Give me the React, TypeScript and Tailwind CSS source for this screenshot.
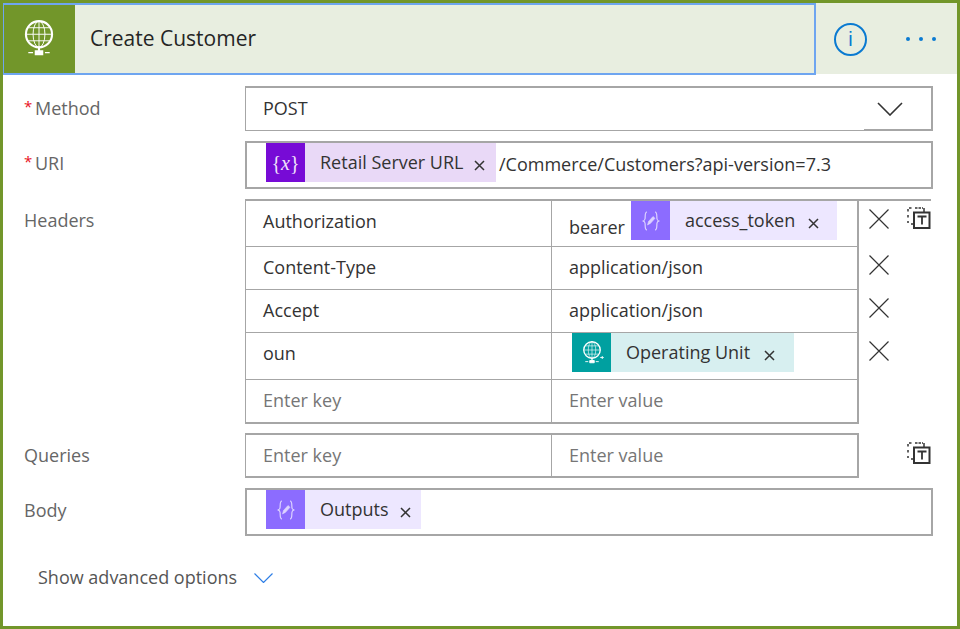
import React from 'react';

const GlobeIcon = ({ size, arrow }: { size: number; arrow?: boolean }) => (
  <svg width={size} height={size} viewBox="0 0 32 32" fill="none" stroke="white" strokeWidth="1.800">
    <circle cx="16" cy="12" r="11" />
    <ellipse cx="16" cy="12" rx="5" ry="11" strokeWidth="0.800" />
    <path d="M5 12h22M7 6.500h18M7 17.500h18M16 1v22" strokeWidth="0.800" />
    <path d="M16 23v3" />
    <path d="M13 26h6v3h-6zM7 27.500h4M21 27.500h4" fill="white" strokeWidth="1.200" />
    {arrow && <path d="M27 22h4M29 20l2 2-2 2" strokeWidth="1.200" />}
  </svg>
);

const VariableIcon = () => (
  <span className="font-['Liberation_Serif',serif] text-[20px] italic leading-none text-[#f1e4fb]">
    <span className="not-italic">{'{'}</span>x<span className="not-italic">{'}'}</span>
  </span>
);

const ComposeIcon = () => (
  <svg width="20" height="22" viewBox="0 0 20 22" fill="none" stroke="#ddd3ff" strokeWidth="1.200">
    <path d="M6 2C3.500 2 4.500 6 4 9c-.3 1.500-1.500 2-2.500 2 1 0 2.200.5 2.500 2 .5 3-.5 7 2 7" />
    <path d="M14 2c2.500 0 1.500 4 2 7 .3 1.500 1.500 2 2.500 2-1 0-2.200.5-2.500 2-.5 3 .5 7-2 7" />
    <path d="M6.500 15l1-3.500 4.500-5 2 1.800-4.500 5z" fill="#ddd3ff" strokeWidth="0.600" />
  </svg>
);

const SmallX = () => (
  <svg width="11" height="11" viewBox="0 0 11 11" stroke="#333" strokeWidth="1.500">
    <path d="M1 1l9 9M10 1l-9 9" />
  </svg>
);

const BigX = () => (
  <svg width="20" height="20" viewBox="0 0 20 20" stroke="#333" strokeWidth="1.200">
    <path d="M0.500 0.500l19 19M19.500 0.500l-19 19" />
  </svg>
);

const TextIcon = () => (
  <svg width="24" height="22" viewBox="0 0 24 22" fill="none" stroke="#333">
    <path d="M8 1h8M2 1h3M1 2v3M1 8v3M1 14v2M4 17h2" strokeWidth="1.500" strokeDasharray="2.500 1" />
    <path d="M17 1v4" strokeWidth="1.500" />
    <rect x="7" y="5.500" width="15.500" height="15.500" strokeWidth="2" />
    <path d="M10.500 9.500h9M15 9.500v8" strokeWidth="1.800" />
  </svg>
);

const Token = ({
  label,
  icon,
  iconBg,
  bg,
  width,
  labelWidth,
}: {
  label: string;
  icon: React.ReactNode;
  iconBg: string;
  bg: string;
  width: string;
  labelWidth: string;
}) => (
  <div className={`flex h-[39px] shrink-0 items-center ${bg} ${width}`}>
    <div className={`flex h-[39px] w-[39px] shrink-0 items-center justify-center ${iconBg}`}>{icon}</div>
    <span className={`ml-[15px] whitespace-nowrap text-[#333] ${labelWidth}`}>{label}</span>
    <span className="mt-[5px] flex">
      <SmallX />
    </span>
  </div>
);

const Label = ({ text, required, className }: { text: string; required?: boolean; className?: string }) => (
  <div className={`flex w-[221px] shrink-0 pl-[21px] text-[#666] ${className ?? ''}`}>
    <span className="w-[11px] text-[15px] text-[#e81123]">{required ? '*' : ''}</span>
    <span className={required ? '' : '-ml-[11px]'}>{text}</span>
  </div>
);

const HeaderRow = ({
  left,
  right,
  height,
  placeholder,
  leftPad,
  children,
}: {
  left: string;
  right?: React.ReactNode;
  height: string;
  placeholder?: boolean;
  leftPad?: string;
  children?: React.ReactNode;
}) => (
  <div className="flex">
    <div className={`flex w-[614px] shrink-0 border-b border-[#a6a6a6] ${height}`}>
      <div className={`flex w-[307px] shrink-0 items-center border-r border-l border-[#a6a6a6] pl-[17px] ${leftPad ?? 'pb-[2px]'} ${placeholder ? 'text-[#767676]' : 'text-[#333]'}`}>
        {left}
      </div>
      <div className={`flex flex-1 items-center border-r-2 border-[#a6a6a6] ${placeholder ? 'text-[#767676]' : 'text-[#333]'}`}>{right}</div>
    </div>
    {children}
  </div>
);

export default function App() {
  return (
    <div className="flex h-[629px] w-[960px] flex-col overflow-hidden border-[3px] border-[#72962a] bg-white font-['Open_Sans',sans-serif] text-[18px]">
      {/* Header bar */}
      <div className="flex h-[71px] shrink-0 bg-[#e8eee0]">
        <div className="-ml-px flex h-[72px] w-[814px] shrink-0 items-stretch border-2 border-[#6ea5f0]">
          <div className="flex w-[71px] items-center justify-center bg-[#72962a] pb-[1px] pr-[1px]">
            <GlobeIcon size={38} />
          </div>
          <div className="flex items-center pl-[15px] text-[21px] text-[#252525]">Create Customer</div>
        </div>
        <div className="flex flex-1 items-center">
          <div className="ml-[18px] mt-[1px] flex h-[33px] w-[33px] items-center justify-center rounded-full border-2 border-[#0a7ad1] font-['Liberation_Sans',sans-serif] text-[20px] leading-none text-[#0a7ad1]">
            i
          </div>
          <div className="ml-[39px] mt-[1px] flex gap-[9px]">
            <span className="h-[4px] w-[4px] rounded-full bg-[#0a7ad1]" />
            <span className="h-[4px] w-[4px] rounded-full bg-[#0a7ad1]" />
            <span className="h-[4px] w-[4px] rounded-full bg-[#0a7ad1]" />
          </div>
        </div>
      </div>

      {/* Form */}
      <div className="flex flex-col">
        <div className="mt-[12px] flex h-[45px] items-center">
          <Label text="Method" required className="pb-[1px]" />
          <div className="ml-[21px] flex h-full w-[688px]">
            <div className="flex flex-1 items-center border-y border-l border-y-[#a6a6a6] border-l-[#a6a6a6] border-t-2 pl-[17px] pb-[1px] text-[#333]">POST</div>
            <div className="flex w-[69px] items-center border-2 border-l-0 border-[#a6a6a6] pl-[13px]">
              <svg width="26" height="14" viewBox="0 0 26 14" fill="none" stroke="#333" strokeWidth="1.600">
                <path d="M1 1l12 12L25 1" />
              </svg>
            </div>
          </div>
        </div>

        <div className="mt-[10px] flex h-[48px] items-center">
          <Label text="URI" required className="pb-[3px]" />
          <div className="ml-[21px] flex h-full w-[688px] items-start border-2 border-[#a6a6a6] pl-[19px]">
            <Token
              label="Retail Server URL"
              icon={<VariableIcon />}
              iconBg="bg-[#770bd6]"
              bg="bg-[#e9d9f7]"
              width="w-[230px]"
              labelWidth="w-[154px]"
            />
            <span className="ml-[3px] mt-[8px] whitespace-nowrap text-[#333]">/Commerce/Customers?api-version=7.3</span>
          </div>
        </div>

        <div className="mt-[10px] flex">
          <Label text="Headers" className="pt-[8px]" />
          <div className="ml-[21px] flex flex-col border-t-2 border-[#a6a6a6]">
            <HeaderRow
              left="Authorization"
              height="h-[46px]"
              leftPad="pb-[5px]"
              right={
                <div className="flex h-full pl-[17px]">
                  <span className="mt-[13px] w-[62px] text-[#333]">bearer</span>
                  <Token
                    label="access_token"
                    icon={<ComposeIcon />}
                    iconBg="bg-[#8c6cff]"
                    bg="bg-[#ede7ff]"
                    width="w-[206px]"
                    labelWidth="w-[123px]"
                  />
                </div>
              }
            >
              <div className="ml-[10px] mt-[8px] flex h-[20px] w-[20px]">
                <BigX />
              </div>
              <div className="ml-[18px] mt-[6px] flex h-[22px]">
                <TextIcon />
              </div>
            </HeaderRow>
            <HeaderRow left="Content-Type" height="h-[43px]" right={<span className="pl-[17px] pb-[2px]">application/json</span>}>
              <div className="ml-[10px] mt-[8px] flex h-[20px] w-[20px]">
                <BigX />
              </div>
            </HeaderRow>
            <HeaderRow left="Accept" height="h-[43px]" right={<span className="pl-[17px] pb-[2px]">application/json</span>}>
              <div className="ml-[10px] mt-[8px] flex h-[20px] w-[20px]">
                <BigX />
              </div>
            </HeaderRow>
            <HeaderRow
              left="oun"
              height="h-[47px]"
              leftPad="pb-[6px]"
              right={
                <div className="flex h-full pl-[20px]">
                  <Token
                    label="Operating Unit"
                    icon={<GlobeIcon size={24} arrow />}
                    iconBg="bg-[#00a0a0]"
                    bg="bg-[#d7eff0]"
                    width="w-[222px]"
                    labelWidth="w-[138px]"
                  />
                </div>
              }
            >
              <div className="ml-[10px] mt-[8px] flex h-[20px] w-[20px]">
                <BigX />
              </div>
            </HeaderRow>
            <HeaderRow left="Enter key" height="h-[44px] border-b-2" placeholder right={<span className="pl-[17px] pb-[2px]">Enter value</span>} />
          </div>
        </div>

        <div className="mt-[9px] flex h-[45px] items-center">
          <Label text="Queries" className="pb-[1px]" />
          <div className="ml-[21px] flex h-full w-[614px] border-y-2 border-l border-r-2 border-[#a6a6a6] text-[#767676]">
            <div className="flex w-[306px] items-center border-r border-[#a6a6a6] pl-[17px] pb-[1px]">Enter key</div>
            <div className="flex items-center pl-[17px] pb-[1px]">Enter value</div>
          </div>
          <div className="ml-[48px] mt-[-5px] flex h-[22px]">
            <TextIcon />
          </div>
        </div>

        <div className="mt-[10px] flex h-[48px] items-center">
          <Label text="Body" className="pb-[3px]" />
          <div className="ml-[21px] flex h-full w-[688px] items-start border-2 border-[#a6a6a6] pl-[19px]">
            <Token
              label="Outputs"
              icon={<ComposeIcon />}
              iconBg="bg-[#8c6cff]"
              bg="bg-[#ede7ff]"
              width="w-[155px]"
              labelWidth="w-[80px]"
            />
          </div>
        </div>

        <div className="mt-[28px] flex items-center pl-[35px] text-[#555]">
          <span>Show advanced options</span>
          <svg className="ml-[17px]" width="19" height="10" viewBox="0 0 19 10" fill="none" stroke="#2f7fe6" strokeWidth="1.200">
            <path d="M0.500 0.500l9 9 9-9" />
          </svg>
        </div>
      </div>
    </div>
  );
}
